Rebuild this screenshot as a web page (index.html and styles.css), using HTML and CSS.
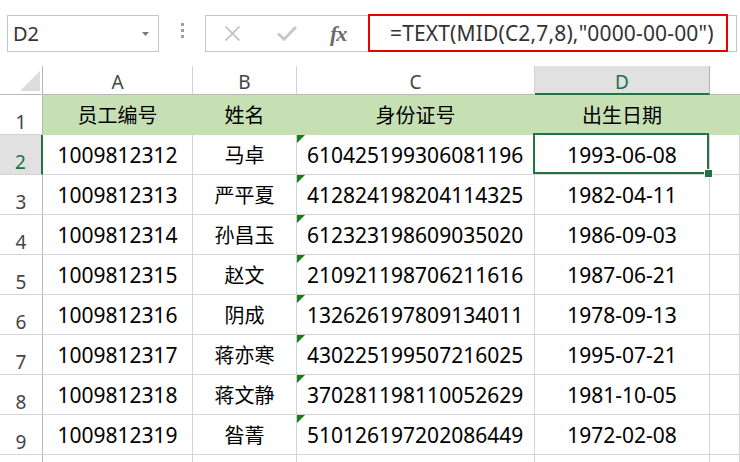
FILE: index.html
```html
<!DOCTYPE html>
<html lang="zh-CN">
<head>
<meta charset="utf-8">
<title>Sheet</title>
<link rel="stylesheet" href="styles.css">
</head>
<body>
<div class="toolbar">
  <div class="namebox">
    <span class="nb-text">D2</span>
    <svg class="caret" width="7" height="4" viewBox="0 0 7 4"><path d="M0 0H7L3.5 4Z" fill="#7a7a7a"/></svg>
  </div>
  <div class="grip"><i></i><i></i><i></i></div>
  <div class="fbar">
    <div class="ficons">
      <svg class="ic-x" width="17" height="15" viewBox="0 0 17 15"><path d="M1.5 0.5L15.5 14.5M15.5 0.5L1.5 14.5" stroke="#bdbdbd" stroke-width="1.6" fill="none"/></svg>
      <svg class="ic-ok" width="20" height="15" viewBox="0 0 20 15"><path d="M1 7.5L7 13.2L19 1" stroke="#c8c8c8" stroke-width="3" fill="none"/></svg>
      <span class="ic-fx">fx</span>
    </div>
    <div class="ftext">=TEXT(MID(C2,7,8),"0000-00-00")</div>
  </div>
</div>
<div class="sheet">
  <div class="corner"><span class="tri"></span></div>
  <div class="ch">A</div>
  <div class="ch">B</div>
  <div class="ch">C</div>
  <div class="ch sel">D</div>
  <div class="ch last"></div>

  <div class="rh">1</div>
  <div class="c hd cn">员工编号</div>
  <div class="c hd cn">姓名</div>
  <div class="c hd cn">身份证号</div>
  <div class="c hd cn">出生日期</div>
  <div class="c hd"></div>

  <div class="rh sel">2</div>
  <div class="c">1009812312</div>
  <div class="c cn">马卓</div>
  <div class="c id">610425199306081196</div>
  <div class="c active">1993-06-08</div>
  <div class="c"></div>

  <div class="rh">3</div>
  <div class="c">1009812313</div>
  <div class="c cn">严平夏</div>
  <div class="c id">412824198204114325</div>
  <div class="c">1982-04-11</div>
  <div class="c"></div>

  <div class="rh">4</div>
  <div class="c">1009812314</div>
  <div class="c cn">孙昌玉</div>
  <div class="c id">612323198609035020</div>
  <div class="c">1986-09-03</div>
  <div class="c"></div>

  <div class="rh">5</div>
  <div class="c">1009812315</div>
  <div class="c cn">赵文</div>
  <div class="c id">210921198706211616</div>
  <div class="c">1987-06-21</div>
  <div class="c"></div>

  <div class="rh">6</div>
  <div class="c">1009812316</div>
  <div class="c cn">阴成</div>
  <div class="c id">132626197809134011</div>
  <div class="c">1978-09-13</div>
  <div class="c"></div>

  <div class="rh">7</div>
  <div class="c">1009812317</div>
  <div class="c cn">蒋亦寒</div>
  <div class="c id">430225199507216025</div>
  <div class="c">1995-07-21</div>
  <div class="c"></div>

  <div class="rh">8</div>
  <div class="c">1009812318</div>
  <div class="c cn">蒋文静</div>
  <div class="c id">370281198110052629</div>
  <div class="c">1981-10-05</div>
  <div class="c"></div>

  <div class="rh">9</div>
  <div class="c">1009812319</div>
  <div class="c cn">昝菁</div>
  <div class="c id">510126197202086449</div>
  <div class="c">1972-02-08</div>
  <div class="c"></div>

  <div class="rh"></div>
  <div class="c"></div>
  <div class="c"></div>
  <div class="c"></div>
  <div class="c"></div>
  <div class="c"></div>
</div>
</body>
</html>
```
FILE: styles.css
```css
* { box-sizing: border-box; }
html, body {
  margin: 0;
  padding: 0;
  background: #fff;
  width: 740px;
  height: 462px;
  overflow: hidden;
}
body {
  font-family: "Noto Sans", "Noto Sans CJK SC", sans-serif;
  color: #000;
}

/* ---------- formula bar ---------- */
.toolbar {
  height: 66px;
  padding-top: 15px;
  display: flex;
  align-items: flex-start;
}
.namebox {
  margin-left: 7px;
  width: 152px;
  height: 37px;
  border: 1px solid #c6c6c6;
  display: flex;
  align-items: center;
  justify-content: space-between;
  padding: 0 9px 0 5px;
}
.nb-text {
  font-size: 20px;
  color: #333;
  line-height: 1;
}
.caret { display: block; margin-top: 1px; }
.grip {
  width: 46px;
  height: 37px;
  display: flex;
  flex-direction: column;
  align-items: center;
  padding-top: 8px;
  gap: 3px;
}
.grip i {
  display: block;
  width: 3px;
  height: 3px;
  background: #9e9e9e;
}
.fbar {
  flex: 1;
  margin-right: 3px;
  height: 37px;
  border: 1px solid #c6c6c6;
  display: flex;
  align-items: stretch;
  background: #fff;
}
.ficons {
  width: 162px;
  display: flex;
  align-items: center;
}
.ic-x { margin-left: 18px; display: block; }
.ic-ok { margin-left: 36px; display: block; }
.ic-fx {
  margin-left: 33px;
  font-family: "Liberation Serif", serif;
  font-style: italic;
  font-weight: bold;
  font-size: 22px;
  color: #6a6a6a;
  line-height: 1;
  letter-spacing: -1px;
}
.ftext {
  width: 360px;
  margin: -2px 0 -1px 0;
  border: 2px solid #e60000;
  display: flex;
  align-items: center;
  padding-left: 20px;
  font-size: 21px;
  letter-spacing: 0.15px;
  color: #333;
  white-space: nowrap;
}

/* ---------- sheet grid ---------- */
.sheet {
  display: grid;
  grid-template-columns: 43px 150px 104px 238px 175px 1fr;
  grid-template-rows: 29px;
  grid-auto-rows: 40px;
}
.corner {
  border-right: 1px solid #b8b8b8;
  border-bottom: 1px solid #b8b8b8;
  display: flex;
  justify-content: flex-end;
  align-items: flex-end;
  padding: 0 2px 3px 0;
}
.tri {
  width: 0;
  height: 0;
  border-left: 20px solid transparent;
  border-bottom: 20px solid #dcdcdc;
}
.ch {
  border-right: 1px solid #d4d4d4;
  border-bottom: 1px solid #b8b8b8;
  display: flex;
  justify-content: center;
  align-items: center;
  padding-top: 3px;
  font-size: 19px;
  color: #444;
}
.ch.sel {
  background: #e1e1e1;
  border-right-color: #b0b0b0;
  border-bottom: 2px solid #217346;
  color: #217346;
  padding-top: 4px;
}
.ch.last { border-right: none; }

.rh {
  border-right: 1px solid #b8b8b8;
  border-bottom: 1px solid #d4d4d4;
  display: flex;
  justify-content: center;
  align-items: flex-end;
  padding-bottom: 2px;
  font-size: 19px;
  line-height: 1;
  color: #444;
}
.rh.sel {
  background: #e1e1e1;
  border-right: 2px solid #217346;
  color: #217346;
}

.c {
  position: relative;
  border-right: 1px solid #d4d4d4;
  border-bottom: 1px solid #d4d4d4;
  display: flex;
  justify-content: center;
  align-items: center;
  font-size: 21px;
  white-space: nowrap;
}
.c.cn { font-size: 20px; }
.c.hd {
  background: #c6e0b4;
  border-color: #c6e0b4;
}
.c.id {
  justify-content: flex-start;
  padding-left: 10px;
}
.c.id::before {
  content: "";
  position: absolute;
  top: 0;
  left: 0;
  border-top: 8px solid #138013;
  border-right: 8px solid transparent;
}
.c.active::after {
  content: "";
  position: absolute;
  top: -2px;
  left: -2px;
  right: 0;
  bottom: 0;
  border: 2px solid #217346;
  z-index: 2;
}
.c.active::before {
  content: "";
  position: absolute;
  right: -3px;
  bottom: -3px;
  width: 7px;
  height: 7px;
  background: #217346;
  box-shadow: 0 0 0 1px #fff;
  z-index: 3;
}
```
